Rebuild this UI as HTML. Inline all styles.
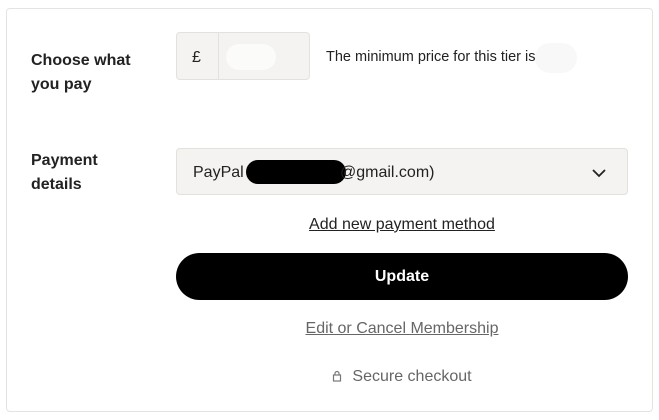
<!DOCTYPE html>
<html><head><style>
body{margin:0;width:659px;height:420px;background:#fff;font-family:"Liberation Sans",Arial,sans-serif;position:relative;overflow:hidden}
.card{position:absolute;left:6px;top:8px;width:645px;height:402px;border:1px solid #e5e3dd;border-radius:4px}
.a{position:absolute}
.lbl{font-weight:bold;font-size:16px;color:#222;line-height:24px;left:31px}
.box{background:#f4f3f1;border:1px solid #e3e1dc;border-radius:4px;box-sizing:border-box}
</style></head><body>
<div class="card"></div>
<div class="a lbl" style="top:49px">Choose what<br>you pay</div>
<div class="a lbl" style="top:149px">Payment<br>details</div>
<div class="a box" style="left:176px;top:32px;width:134px;height:48px"></div>
<div class="a" style="left:218px;top:33px;width:1px;height:46px;background:#e3e1dc"></div>
<div class="a" style="left:192px;top:49px;font-size:16px;color:#222">£</div>
<div class="a" style="left:226px;top:44px;width:50px;height:26px;border-radius:13px;background:#fbfbfa"></div>
<div class="a" style="left:326px;top:49px;font-size:14.5px;color:#222">The minimum price for this tier is</div>
<div class="a" style="left:535px;top:43px;width:42px;height:30px;border-radius:15px;background:#f8f8f8"></div>
<div class="a box" style="left:176px;top:148px;width:452px;height:47px"></div>
<div class="a" style="left:193px;top:164px;font-size:16px;color:#222">PayPal</div>
<div class="a" style="left:246px;top:160px;width:100px;height:24px;border-radius:12px;background:#000"></div>
<div class="a" style="left:340px;top:164px;font-size:16px;color:#222">@gmail.com)</div>
<svg class="a" style="left:591px;top:167px" width="16" height="12" viewBox="0 0 16 12"><path d="M2 3l6 6 6-6" fill="none" stroke="#222" stroke-width="1.8"/></svg>
<div class="a" style="left:176px;width:452px;top:216px;text-align:center;font-size:16px;color:#222;text-decoration:underline">Add new payment method</div>
<div class="a" style="left:176px;top:253px;width:452px;height:47px;border-radius:24px;background:#000;color:#fff;font-weight:bold;font-size:16px;text-align:center;line-height:48px">Update</div>
<div class="a" style="left:176px;width:452px;top:320px;text-align:center;font-size:16px;color:#666;text-decoration:underline">Edit or Cancel Membership</div>
<div class="a" style="left:176px;width:452px;top:368px;text-align:center;font-size:16px;color:#666"><svg width="10" height="12" viewBox="0 0 10 12" style="margin-right:10px;vertical-align:-1px"><rect x="1.5" y="5" width="7" height="6" fill="none" stroke="#777" stroke-width="1.2"/><path d="M3 5V3.5a2 2 0 0 1 4 0V5" fill="none" stroke="#777" stroke-width="1.2"/></svg>Secure checkout</div>
</body></html>
